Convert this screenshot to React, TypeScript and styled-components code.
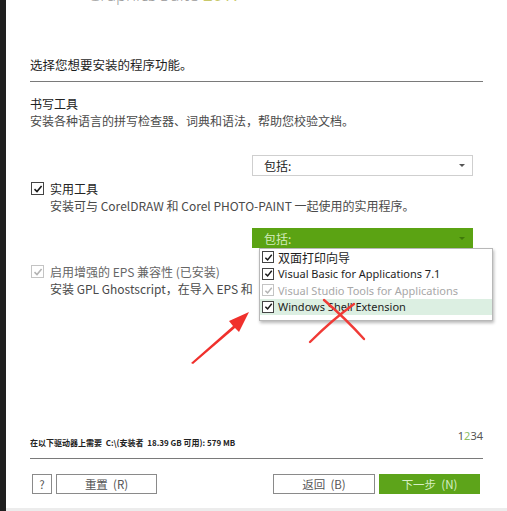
import styled, { createGlobalStyle } from 'styled-components';

const GlobalStyle = createGlobalStyle`
  html, body {
    margin: 0;
    padding: 0;
    background: #ececec;
  }
  body {
    font-family: "Noto Sans CJK SC", "Noto Sans", sans-serif;
    color: #222;
  }
`;

const Page = styled.div`
  position: relative;
  display: flex;
  width: 507px;
  height: 511px;
  overflow: hidden;
`;

const DarkEdge = styled.div`
  width: 6px;
  background: #1f1f1f;
  flex-shrink: 0;
`;

const Panel = styled.div`
  flex: 1;
  height: 508px;
  background: #fff;
  display: flex;
  flex-direction: column;
  padding: 0 24px 14px 24px;
  box-sizing: border-box;
`;

const HeaderCrop = styled.div`
  height: 6px;
  overflow: hidden;
  padding-left: 58px;

  span {
    display: block;
    margin-top: -15px;
    font-family: "Open Sans", sans-serif;
    font-size: 17px;
    line-height: 20px;
    color: #9a9a9a;
    font-weight: 300;
  }

  b {
    color: #c8c86a;
    font-weight: 400;
  }
`;

const Title = styled.div`
  margin-top: 50px;
  font-size: 12.5px;
  line-height: 18px;
  color: #1e1e1e;
`;

const Divider = styled.div<{ $top: number }>`
  margin-top: ${(p) => p.$top}px;
  height: 1px;
  background: #7a7a7a;
`;

const Section = styled.div<{ $top: number; $indent?: boolean }>`
  margin-top: ${(p) => p.$top}px;
  display: flex;
  align-items: flex-start;
  gap: 6px;
  padding-left: ${(p) => (p.$indent ? 1 : 0)}px;
`;

const TextBlock = styled.div<{ $muted?: boolean }>`
  display: flex;
  flex-direction: column;
  font-size: 12px;
  line-height: 17px;
  white-space: nowrap;

  .name {
    color: ${(p) => (p.$muted ? '#666' : '#222')};
  }
  .desc {
    color: #4a4a4a;
  }
`;

const Box = styled.span<{ $disabled?: boolean; $size: number }>`
  width: ${(p) => p.$size}px;
  height: ${(p) => p.$size}px;
  box-sizing: border-box;
  border: 1px solid ${(p) => (p.$disabled ? '#c4c4c4' : '#444')};
  background: #fff;
  display: flex;
  align-items: center;
  justify-content: center;
  flex-shrink: 0;

  svg {
    width: ${(p) => p.$size - 3}px;
    height: ${(p) => p.$size - 3}px;
  }
  path {
    stroke: ${(p) => (p.$disabled ? '#b4b4b4' : '#1a1a1a')};
  }
`;

const CheckBoxWrap = styled.div`
  margin-top: 2px;
`;

const Check = ({ disabled, size = 13 }: { disabled?: boolean; size?: number }) => (
  <Box $disabled={disabled} $size={size}>
    <svg viewBox="0 0 10 10">
      <path d="M1.5 5.2 L4 7.6 L8.6 2" fill="none" strokeWidth="1.6" />
    </svg>
  </Box>
);

const SelectRow = styled.div<{ $top: number }>`
  margin-top: ${(p) => p.$top}px;
  display: flex;
  justify-content: flex-end;
  padding-right: 10px;
`;

const SelectBox = styled.div<{ $active?: boolean }>`
  position: relative;
  width: 221px;
  height: ${(p) => (p.$active ? 20 : 21)}px;
  box-sizing: border-box;
  border: 1px solid ${(p) => (p.$active ? '#5ba313' : '#cfcfcf')};
  background: ${(p) => (p.$active ? '#5ba313' : '#fff')};
  color: ${(p) => (p.$active ? '#d4ecbd' : '#222')};
  display: flex;
  align-items: center;
  justify-content: space-between;
  padding: 0 7px 0 11px;
  font-size: 12px;

  .arrow {
    width: 0;
    height: 0;
    border-left: 3px solid transparent;
    border-right: 3px solid transparent;
    border-top: 3px solid ${(p) => (p.$active ? '#3f7a0a' : '#555')};
  }
`;

const DropList = styled.div`
  position: absolute;
  left: 6px;
  top: 19px;
  width: 234px;
  box-sizing: border-box;
  background: #fff;
  border: 1px solid #b8b8b8;
  box-shadow: 1px 2px 3px rgba(0, 0, 0, 0.28);
  padding: 0 0 5px 0;
  z-index: 2;
`;

const DropItem = styled.div<{ $disabled?: boolean; $hover?: boolean }>`
  height: 16.5px;
  display: flex;
  align-items: center;
  gap: 4px;
  padding-left: 2px;
  font-family: "Noto Sans", "Noto Sans CJK SC", sans-serif;
  font-size: 11px;
  color: ${(p) => (p.$disabled ? '#a8a8a8' : '#1e1e1e')};
  background: ${(p) => (p.$hover ? '#dcefe2' : 'transparent')};
  white-space: nowrap;

  &:first-child {
    font-family: "Noto Sans CJK SC", sans-serif;
    font-size: 12px;
  }
`;

const Footer = styled.div`
  margin-top: auto;
  display: flex;
  flex-direction: column;
`;

const InfoRow = styled.div`
  display: flex;
  justify-content: space-between;
  align-items: flex-end;
`;

const DiskText = styled.div`
  font-size: 8px;
  font-weight: 700;
  line-height: 12px;
  color: #222;
  white-space: pre;
`;

const Pager = styled.div`
  font-family: "Noto Sans", sans-serif;
  font-size: 11px;
  line-height: 14px;
  color: #555;
  padding-bottom: 6px;

  span {
    color: #8cc063;
  }
`;

const ButtonRow = styled.div`
  margin-top: 15px;
  display: flex;
  align-items: center;
  gap: 4px;
  padding: 0 3px 0 2px;
`;

const Button = styled.div<{ $width: number; $primary?: boolean }>`
  width: ${(p) => p.$width}px;
  height: 20px;
  box-sizing: border-box;
  border: 1px solid ${(p) => (p.$primary ? '#5da41a' : '#8a8a8a')};
  background: ${(p) => (p.$primary ? '#5da41a' : '#fff')};
  color: ${(p) => (p.$primary ? '#d7efc4' : '#555')};
  display: flex;
  align-items: center;
  justify-content: center;
  font-size: 11.5px;
  white-space: pre;
`;

const Spacer = styled.div`
  flex: 1;
`;

const Annotation = styled.svg`
  position: absolute;
  left: 0;
  top: 0;
  width: 507px;
  height: 511px;
  pointer-events: none;
  z-index: 3;
`;

const dropItems = [
  { label: '双面打印向导' },
  { label: 'Visual Basic for Applications 7.1' },
  { label: 'Visual Studio Tools for Applications', disabled: true },
  { label: 'Windows Shell Extension', hover: true },
];

const App = () => {
  return (
    <>
      <GlobalStyle />
      <Page>
        <DarkEdge />
        <Panel>
          <HeaderCrop>
            <span>
              Graphics Suite <b>2017</b>
            </span>
          </HeaderCrop>
          <Title>选择您想要安装的程序功能。</Title>
          <Divider $top={7} />

          <Section $top={13}>
            <TextBlock>
              <span className="name">书写工具</span>
              <span className="desc">安装各种语言的拼写检查器、词典和语法，帮助您校验文档。</span>
            </TextBlock>
          </Section>

          <SelectRow $top={26}>
            <SelectBox>
              <span>包括:</span>
              <span className="arrow" />
            </SelectBox>
          </SelectRow>

          <Section $top={4} $indent>
            <CheckBoxWrap>
              <Check />
            </CheckBoxWrap>
            <TextBlock>
              <span className="name">实用工具</span>
              <span className="desc">安装可与 CorelDRAW 和 Corel PHOTO-PAINT 一起使用的实用程序。</span>
            </TextBlock>
          </Section>

          <SelectRow $top={14}>
            <SelectBox $active>
              <span>包括:</span>
              <span className="arrow" />
              <DropList>
                {dropItems.map((el, i) => (
                  <DropItem key={i} $disabled={el.disabled} $hover={el.hover}>
                    <Check size={12} disabled={el.disabled} />
                    {el.label}
                  </DropItem>
                ))}
              </DropList>
            </SelectBox>
          </SelectRow>

          <Section $top={15} $indent>
            <CheckBoxWrap>
              <Check disabled />
            </CheckBoxWrap>
            <TextBlock $muted>
              <span className="name">启用增强的 EPS 兼容性 (已安装)</span>
              <span className="desc">安装 GPL Ghostscript，在导入 EPS 和</span>
            </TextBlock>
          </Section>

          <Footer>
            <InfoRow>
              <DiskText>{'在以下驱动器上需要  C:\\(安装者  18.39 GB 可用): 579 MB'}</DiskText>
              <Pager>
                1<span>2</span>34
              </Pager>
            </InfoRow>
            <Divider $top={9} />
            <ButtonRow>
              <Button $width={20}>?</Button>
              <Button $width={101}>{'重置  (R)'}</Button>
              <Spacer />
              <Button $width={102}>{'返回  (B)'}</Button>
              <Button $width={101} $primary>
                {'下一步  (N)'}
              </Button>
            </ButtonRow>
          </Footer>
        </Panel>

        <Annotation viewBox="0 0 507 511">
          <path d="M191 363 L233 326 L229 321 L249 312 L239 332 L235 328 L193 364 Z" fill="#f0302c" />
          <path d="M324 300 Q345 318 364 339" stroke="#f03a36" strokeWidth="2.4" fill="none" strokeLinecap="round" />
          <path d="M310 342 Q332 320 354 304" stroke="#f03a36" strokeWidth="2.4" fill="none" strokeLinecap="round" />
        </Annotation>
      </Page>
    </>
  );
};

export default App;
